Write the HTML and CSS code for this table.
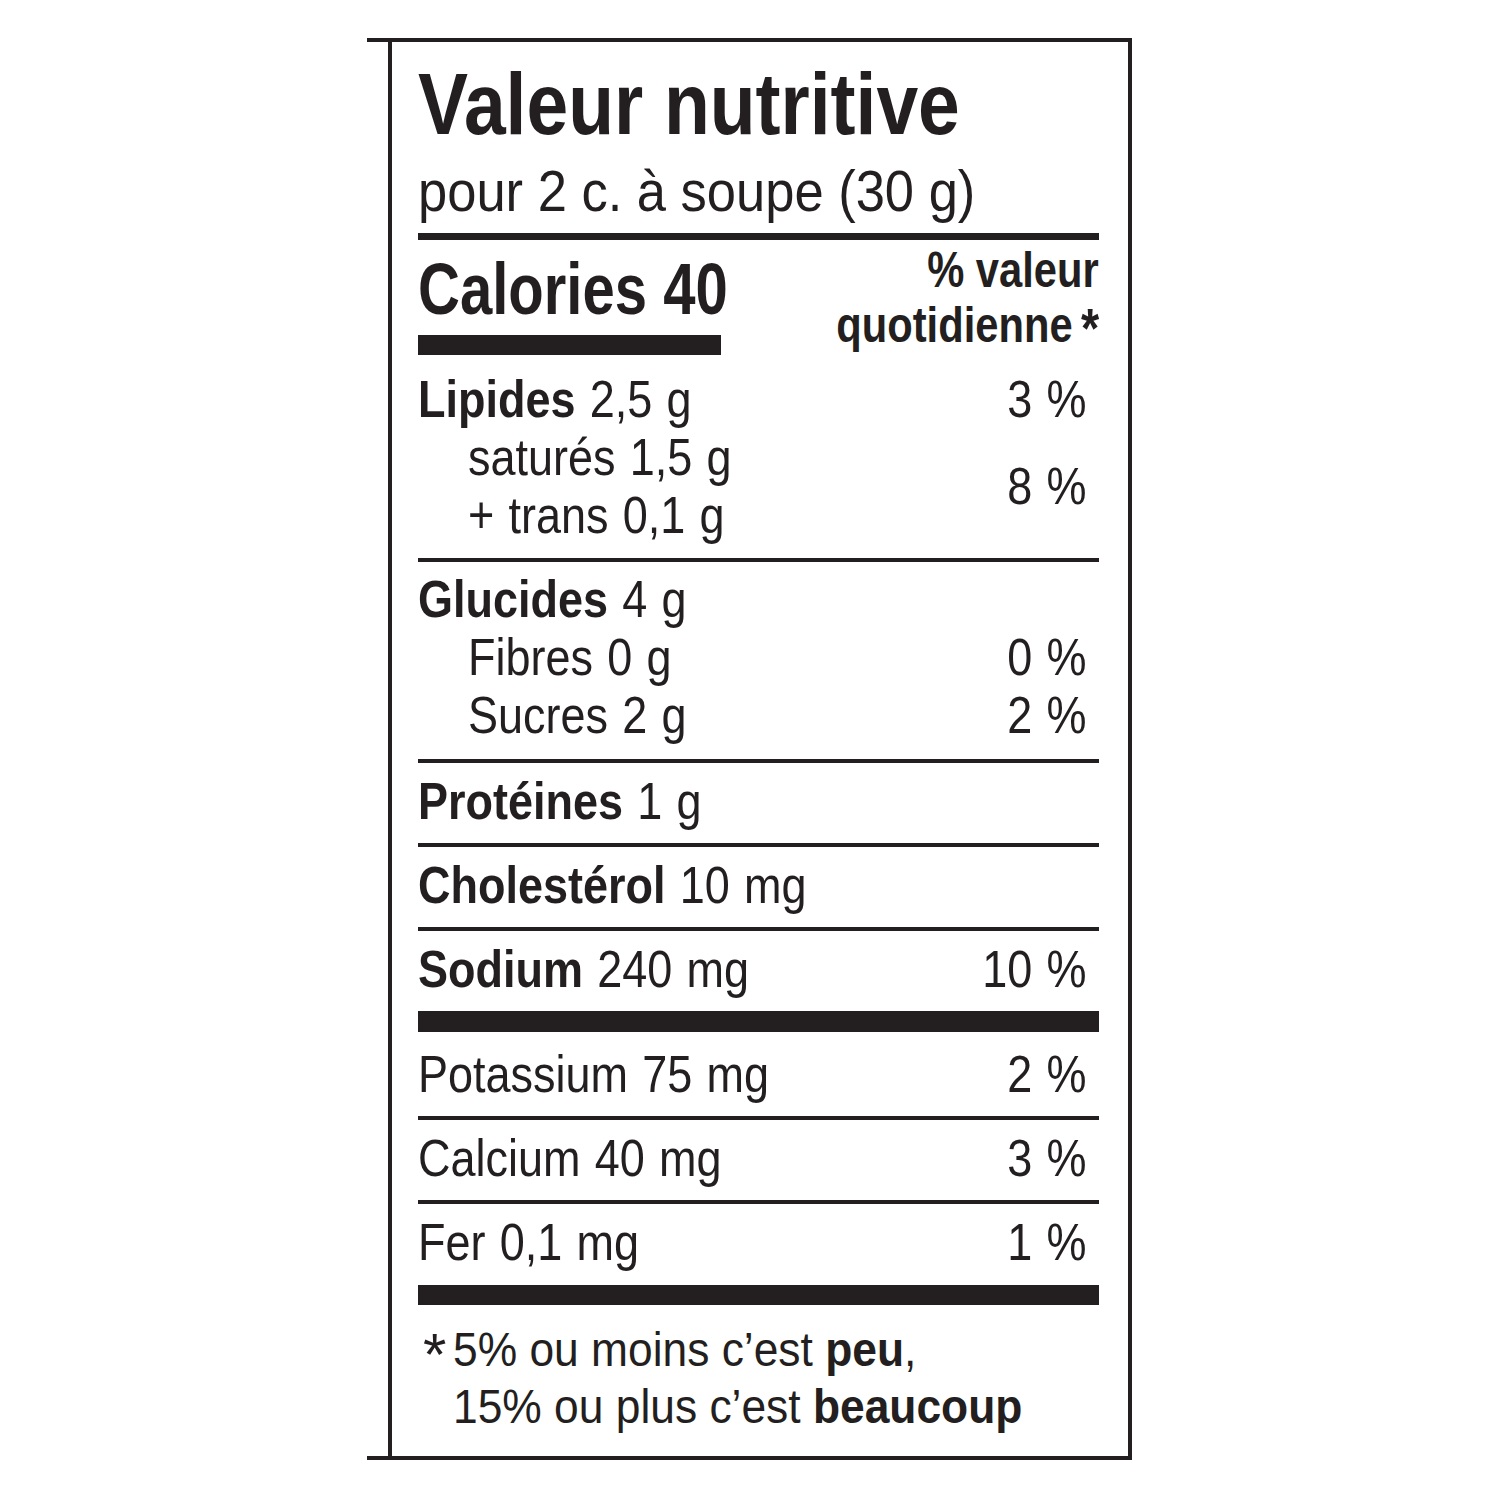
FILE: index.html
```html
<!DOCTYPE html>
<html lang="fr">
<head>
<meta charset="utf-8">
<title>Valeur nutritive</title>
<link rel="stylesheet" href="styles.css">
</head>
<body>
<div class="label">
  <h1 class="title"><span class="t">Valeur nutritive</span></h1>
  <div class="serving"><span class="t">pour 2 c. à soupe (30 g)</span></div>

  <div class="cal-sec">
    <div class="cal-left">
      <div class="cal"><span class="t">Calories 40</span></div>
      <div class="cal-bar"></div>
    </div>
    <div class="dv-head">
      <div><span class="t">% valeur</span></div>
      <div><span class="t">quotidienne<span class="head-star">*</span></span></div>
    </div>
  </div>

  <div class="sec sec-fat">
    <div class="row"><span class="t"><b>Lipides</b> 2,5 g</span><span class="t dv">3 %</span></div>
    <div class="row">
      <div class="sub-lines">
        <div class="sub"><span class="t">saturés 1,5 g</span></div>
        <div class="sub"><span class="t">+ trans 0,1 g</span></div>
      </div>
      <span class="t dv">8 %</span>
    </div>
  </div>

  <div class="sec sec-carb">
    <div class="row"><span class="t"><b>Glucides</b> 4 g</span></div>
    <div class="row"><span class="sub"><span class="t">Fibres 0 g</span></span><span class="t dv">0 %</span></div>
    <div class="row"><span class="sub"><span class="t">Sucres 2 g</span></span><span class="t dv">2 %</span></div>
  </div>

  <div class="sec">
    <div class="row"><span class="t"><b>Protéines</b> 1 g</span></div>
  </div>

  <div class="sec">
    <div class="row"><span class="t"><b>Cholestérol</b> 10 mg</span></div>
  </div>

  <div class="sec sec-thick">
    <div class="row"><span class="t"><b>Sodium</b> 240 mg</span><span class="t dv">10 %</span></div>
  </div>

  <div class="sec sec-after-thick">
    <div class="row"><span class="t">Potassium 75 mg</span><span class="t dv">2 %</span></div>
  </div>

  <div class="sec">
    <div class="row"><span class="t">Calcium 40 mg</span><span class="t dv">3 %</span></div>
  </div>

  <div class="sec sec-last">
    <div class="row"><span class="t">Fer 0,1 mg</span><span class="t dv">1 %</span></div>
  </div>

  <div class="foot">
    <div class="foot-line"><span class="star">*</span><span class="t">5% ou moins c’est <b>peu</b>,</span></div>
    <div class="foot-line foot-indent"><span class="t">15% ou plus c’est <b>beaucoup</b></span></div>
  </div>
</div>
</body>
</html>
```

FILE: styles.css
```css
html, body {
  margin: 0;
  padding: 0;
  background: #ffffff;
}

body {
  color: #231f20;
  font-family: "Liberation Sans", Arial, sans-serif;
}

.t {
  display: inline-block;
  white-space: nowrap;
  transform: scaleX(var(--sx, 0.86));
  transform-origin: 0 50%;
}

.t.dv,
.dv-head .t {
  transform-origin: 100% 50%;
}

.label {
  position: relative;
  box-sizing: border-box;
  width: 744px;
  margin: 38px 0 0 388px;
  border: 4px solid #231f20;
  padding: 0 29px 0 26px;
}

.label::before,
.label::after {
  content: "";
  position: absolute;
  left: -25px;
  width: 25px;
  height: 4px;
  background: #231f20;
}

.label::before {
  top: -4px;
}

.label::after {
  bottom: -4px;
}

.title {
  margin: 0;
  padding-top: 18px;
  font-size: 87px;
  line-height: 88px;
  font-weight: 700;
  --sx: 0.862;
}

.serving {
  margin-top: 14px;
  padding-bottom: 13px;
  border-bottom: 7px solid #231f20;
  font-size: 58px;
  line-height: 58px;
  --sx: 0.905;
}

.cal-sec {
  display: flex;
  justify-content: space-between;
  align-items: flex-start;
  padding-top: 3px;
}

.cal-left {
  flex: none;
  width: 310px;
  padding-top: 9px;
}

.cal {
  font-size: 73px;
  line-height: 74px;
  font-weight: 700;
  --sx: 0.795;
}

.cal-bar {
  width: 303px;
  height: 20px;
  margin-top: 9px;
  background: #231f20;
}

.dv-head {
  margin-left: auto;
  font-size: 50px;
  line-height: 55px;
  font-weight: 700;
  text-align: right;
  --sx: 0.834;
}

.head-star {
  position: relative;
  top: 5px;
  margin-left: 10px;
  font-size: 56px;
  line-height: 0;
}

.sec {
  padding: 9px 0 13px;
  border-bottom: 4px solid #231f20;
}

.sec-fat {
  padding: 15px 0 14px;
}

.sec-carb {
  padding: 8px 0 15px;
}

.sec-thick {
  border-bottom-width: 21px;
}

.sec-after-thick {
  padding-top: 13px;
}

.sec-last {
  padding-bottom: 14px;
  border-bottom-width: 20px;
}

.row {
  display: flex;
  justify-content: space-between;
  align-items: center;
  font-size: 52px;
  line-height: 58px;
  word-spacing: 2px;
  --sx: 0.865;
}

.row b {
  font-weight: 700;
}

.sub {
  padding-left: 50px;
}

.dv {
  margin-right: 12px;
}

.foot {
  padding: 16px 0 21px;
  font-size: 49px;
  line-height: 57px;
  --sx: 0.905;
}

.foot b {
  font-weight: 700;
}

.foot-indent {
  padding-left: 35px;
}

.star {
  display: inline-block;
  width: 35px;
  padding-left: 5px;
  box-sizing: border-box;
  position: relative;
  top: 9px;
  font-size: 60px;
  line-height: 0;
}
```
